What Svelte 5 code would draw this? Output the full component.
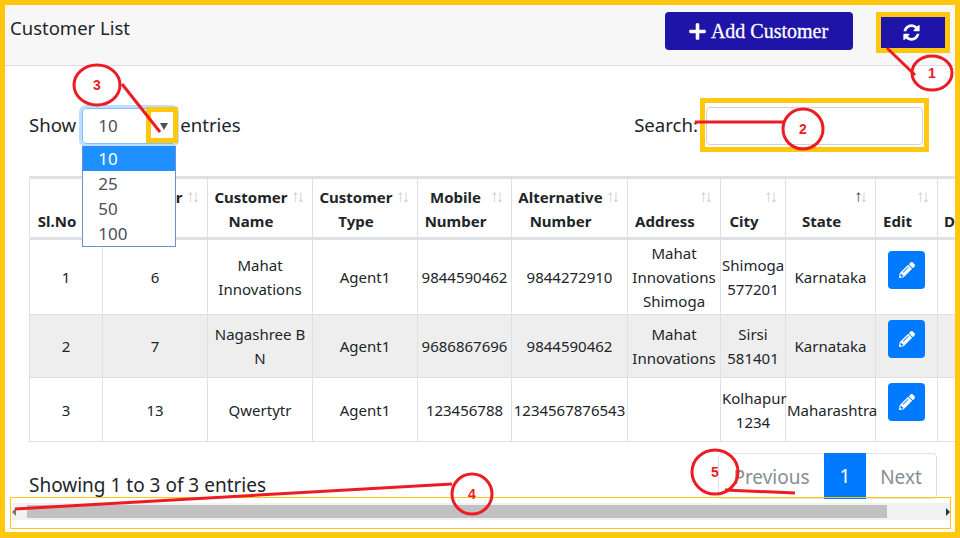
<script>
  const columns = [
    { label: 'Sl.No', width: 73 },
    { label: 'Customer Id', width: 105 },
    { label: 'Customer Name', width: 105 },
    { label: 'Customer Type', width: 105 },
    { label: 'Mobile Number', width: 94 },
    { label: 'Alternative Number', width: 116 },
    { label: 'Address', width: 93 },
    { label: 'City', width: 65 },
    { label: 'State', width: 90, sorted: true },
    { label: 'Edit', width: 62 },
    { label: 'Delete', width: 70 }
  ];

  const rows = [
    ['1', '6', 'Mahat Innovations', 'Agent1', '9844590462', '9844272910', 'Mahat Innovations Shimoga', 'Shimoga 577201', 'Karnataka'],
    ['2', '7', 'Nagashree B N', 'Agent1', '9686867696', '9844590462', 'Mahat Innovations', 'Sirsi 581401', 'Karnataka'],
    ['3', '13', 'Qwertytr', 'Agent1', '123456788', '1234567876543', '', 'Kolhapur 1234', 'Maharashtra']
  ];

  const lengths = ['10', '25', '50', '100'];

  const notes = [
    { n: 1, cx: 932, cy: 73, rx: 20, ry: 17, line: '887,48 915,75' },
    { n: 2, cx: 803, cy: 129, rx: 20, ry: 20, line: '695,122 784,122' },
    { n: 3, cx: 97, cy: 85, rx: 23, ry: 20, line: '122,84 160,132' },
    { n: 4, cx: 472, cy: 494, rx: 20, ry: 20, line: '15,509 452,484' },
    { n: 5, cx: 715, cy: 472, rx: 23, ry: 22, line: '725,490 795,493' }
  ];
</script>

<div class="page">
  <div class="frame">
    <header class="top">
      <span class="title">Customer List</span>
      <div class="actions">
        <button class="add">
          <svg viewBox="0 0 448 512" width="17" height="19"><path fill="#fff" d="M416 208H272V64c0-17.670-14.330-32-32-32h-32c-17.670 0-32 14.330-32 32v144H32c-17.670 0-32 14.330-32 32v32c0 17.670 14.330 32 32 32h144v144c0 17.670 14.330 32 32 32h32c17.670 0 32-14.330 32-32V304h144c17.670 0 32-14.330 32-32v-32c0-17.670-14.330-32-32-32z"/></svg>
          Add Customer
        </button>
        <button class="refresh" aria-label="Refresh">
          <svg viewBox="0 0 1792 1792" width="19" height="19"><path fill="#fff" d="M1639 1056q0 5-1 7-64 268-268 434.5t-478 166.5q-146 0-282.5-55t-243.5-157l-129 129q-19 19-45 19t-45-19-19-45v-448q0-26 19-45t45-19h448q26 0 45 19t19 45-19 45l-137 137q71 66 161 102t187 36q134 0 250-65t186-179q11-17 53-117 8-23 30-23h192q13 0 22.5 9.5t9.5 22.5zm25-800v448q0 26-19 45t-45 19h-448q-26 0-45-19t-19-45 19-45l138-138q-148-137-349-137-134 0-250 65t-186 179q-11 17-53 117-8 23-30 23h-199q-13 0-22.5-9.5t-9.5-22.5v-7q65-268 270-434.5t480-166.5q146 0 284 55.5t245 156.5l130-129q19-19 45-19t45 19 19 45z"/></svg>
        </button>
      </div>
    </header>

    <section class="filters">
      <div class="show">
        <span class="label">Show</span>
        <div class="select">
          <span>10</span>
          <i class="caret"></i>
          <ul class="menu">
            {#each lengths as len, i}
              <li class:active={i === 0}>{len}</li>
            {/each}
          </ul>
        </div>
        <span class="label">entries</span>
      </div>
      <div class="search">
        <span class="label">Search:</span>
        <div class="input"></div>
      </div>
    </section>

    <table>
      <colgroup>
        {#each columns as col}
          <col style="width: {col.width}px" />
        {/each}
      </colgroup>
      <thead>
        <tr>
          {#each columns as col}
            <th>
              {col.label}
              <span class="sort"><b class:on={col.sorted}>↑</b><b>↓</b></span>
            </th>
          {/each}
        </tr>
      </thead>
      <tbody>
        {#each rows as row}
          <tr>
            {#each row as cell}
              <td>{cell}</td>
            {/each}
            <td>
              <button class="edit" aria-label="Edit">
                <svg viewBox="0 0 512 512" width="16" height="16"><path fill="#fff" d="M497.9 142.1l-46.1 46.1c-4.7 4.700-12.300 4.700-17 0l-111-111c-4.700-4.700-4.700-12.300 0-17l46.100-46.100c18.700-18.700 49.100-18.700 67.900 0l60.100 60.100c18.800 18.700 18.800 49.100 0 67.900zM284.200 99.800L21.600 362.400.4 483.900c-2.900 16.400 11.400 30.600 27.800 27.800l121.500-21.300 262.600-262.600c4.700-4.700 4.700-12.300 0-17l-111-111c-4.800-4.700-12.400-4.700-17.100 0zM124.100 339.900c-5.500-5.500-5.500-14.300 0-19.800l154-154c5.500-5.500 14.300-5.500 19.800 0s5.500 14.300 0 19.800l-154 154c-5.500 5.500-14.300 5.500-19.800 0zM88 424h48v36.300l-64.500 11.300-31.100-31.100L51.700 376H88v48z"/></svg>
              </button>
            </td>
            <td></td>
          </tr>
        {/each}
      </tbody>
    </table>

    <footer class="bottom">
      <span class="info">Showing 1 to 3 of 3 entries</span>
      <nav class="pager">
        <span class="prev">Previous</span>
        <span class="current">1</span>
        <span class="next">Next</span>
      </nav>
    </footer>
  </div>

  <div class="scrollbar">
    <i class="arrow left"></i>
    <div class="thumb"></div>
    <i class="arrow right"></i>
  </div>

  <svg class="notes" width="960" height="538">
    <g fill="none" stroke="#ffc80e">
      <rect x="878.5" y="14.500" width="69" height="36" stroke-width="5" />
      <rect x="702.500" y="100.500" width="224" height="49" stroke-width="5" />
      <rect x="148.500" y="109.500" width="27" height="31" stroke-width="5" />
      <rect x="10.500" y="497.500" width="940" height="31" stroke-width="1" />
    </g>
    {#each notes as note}
      <polyline points={note.line} fill="none" stroke="#ed1c24" stroke-width="3" />
      <ellipse cx={note.cx} cy={note.cy} rx={note.rx} ry={note.ry} fill="none" stroke="#ed1c24" stroke-width="3" />
      <text x={note.cx} y={note.cy + 5} text-anchor="middle">{note.n}</text>
    {/each}
  </svg>
</div>

<style>
  :global(body) {
    margin: 0;
    background: #fff;
  }

  .page {
    position: relative;
    width: 960px;
    height: 538px;
    overflow: hidden;
    font-family: "Noto Sans", sans-serif;
    color: #212529;
  }

  .frame {
    box-sizing: border-box;
    height: 100%;
    border: solid #ffc80e;
    border-width: 5px 5px 6px;
    overflow: hidden;
  }

  .top {
    height: 60px;
    display: flex;
    justify-content: space-between;
    background: #f7f7f7;
    border-bottom: 1px solid #dcdcdc;
  }

  .title {
    font-size: 18.5px;
    line-height: 24px;
    margin: 11px 0 0 5px;
  }

  .actions {
    display: flex;
    gap: 28px;
    align-items: flex-start;
    margin: 7px 10px 0 0;
  }

  button {
    border: 0;
    padding: 0;
    display: flex;
    align-items: center;
    justify-content: center;
    color: #fff;
  }

  .add {
    width: 188px;
    height: 38px;
    gap: 5px;
    padding-top: 1px;
    padding-right: 1px;
    background: #1e14a8;
    border-radius: 4px;
    font: 20px "Liberation Serif", serif;
    -webkit-text-stroke: 0.3px #fff;
  }

  .refresh {
    width: 64px;
    height: 31px;
    margin-top: 5px;
    padding-right: 4px;
    background: #1e14a8;
  }

  .filters {
    display: flex;
    justify-content: space-between;
    align-items: center;
    height: 38px;
    margin: 41px 32px 0 24px;
    font-size: 18.6px;
  }

  .label {
    padding-bottom: 4px;
  }

  .show {
    display: flex;
    align-items: center;
    gap: 5px;
  }

  .select {
    position: relative;
    box-sizing: border-box;
    width: 94px;
    height: 36px;
    margin: 0 -1px 0 1px;
    padding: 0 15px;
    line-height: 34px;
    font-size: 17px;
    color: #495057;
    border: 1px solid #80bdff;
    border-radius: 4px;
    box-shadow: 0 0 0 3px #bfdeff;
  }

  .caret {
    position: absolute;
    right: 7px;
    top: 14px;
    border: solid transparent;
    border-width: 7px 4px 0;
    border-top-color: #495057;
  }

  .menu {
    position: absolute;
    z-index: 2;
    left: -1px;
    top: 37px;
    width: 94px;
    box-sizing: border-box;
    margin: 0;
    padding: 0;
    list-style: none;
    background: #fff;
    border: 1px solid #6f8fd0;
    border-top: 0;
  }

  .menu li {
    height: 25px;
    line-height: 25px;
    padding-left: 15px;
    color: #495057;
  }

  .menu li.active {
    background: #1e90ff;
    color: #fff;
  }

  .search {
    display: flex;
    align-items: center;
    gap: 8px;
  }

  .input {
    width: 217px;
    height: 38px;
    box-sizing: border-box;
    border: 1px solid #ced4da;
    border-radius: 4px;
  }

  table {
    table-layout: fixed;
    width: 978px;
    margin: 31px 0 0 24px;
    border-collapse: collapse;
    font-size: 15px;
    line-height: 24px;
    text-align: center;
  }

  th,
  td {
    border: 1px solid #dee2e6;
  }

  th {
    position: relative;
    height: 59px;
    box-sizing: border-box;
    padding: 6px 24px 4px 6px;
    vertical-align: bottom;
    font-weight: 700;
    border-top-width: 3px;
    border-bottom-width: 3px;
  }

  .sort {
    position: absolute;
    top: 5px;
    right: 10px;
    line-height: 24px;
    font-size: 17px;
    letter-spacing: -3px;
  }

  .sort b {
    font-weight: 400;
    color: #c8ccd0;
  }

  .sort b.on {
    color: #444;
  }

  td {
    padding: 1px;
    vertical-align: middle;
  }

  tbody tr:nth-child(2) {
    background: #eee;
  }

  .edit {
    width: 37px;
    height: 38px;
    margin: 4px auto 19px;
    background: #007bff;
    border-radius: 4px;
  }

  tbody tr:nth-child(2) .edit {
    margin-bottom: 18px;
  }

  .bottom {
    display: flex;
    justify-content: space-between;
    align-items: flex-start;
    margin: 11px 18px 0 24px;
    font-size: 19px;
  }

  .info {
    margin-top: 19px;
    line-height: 26px;
  }

  .pager {
    display: flex;
    height: 46px;
    line-height: 46px;
    box-sizing: border-box;
    border: 1px solid #dee2e6;
    border-radius: 4px;
    color: #868e96;
  }

  .prev {
    width: 105px;
    text-align: center;
  }

  .current {
    width: 42px;
    margin-top: -1px;
    height: 46px;
    text-align: center;
    background: #007bff;
    color: #fff;
  }

  .next {
    width: 70px;
    text-align: center;
  }

  .scrollbar {
    position: absolute;
    left: 12px;
    top: 503px;
    width: 938px;
    height: 17px;
    background: #f1f1f1;
  }

  .thumb {
    position: absolute;
    left: 15px;
    top: 2px;
    width: 860px;
    height: 13px;
    background: #c1c1c1;
  }

  .arrow {
    position: absolute;
    top: 5px;
    border: solid transparent;
    border-width: 4px;
  }

  .arrow.left {
    left: 0;
    border-right-color: #777;
    border-left-width: 0;
  }

  .arrow.right {
    right: 0;
    border-left-color: #333;
    border-right-width: 0;
  }

  .notes {
    position: absolute;
    left: 0;
    top: 0;
    z-index: 3;
    pointer-events: none;
  }

  .notes text {
    font: 700 14px "Liberation Sans", sans-serif;
    fill: #ed1c24;
  }
</style>
